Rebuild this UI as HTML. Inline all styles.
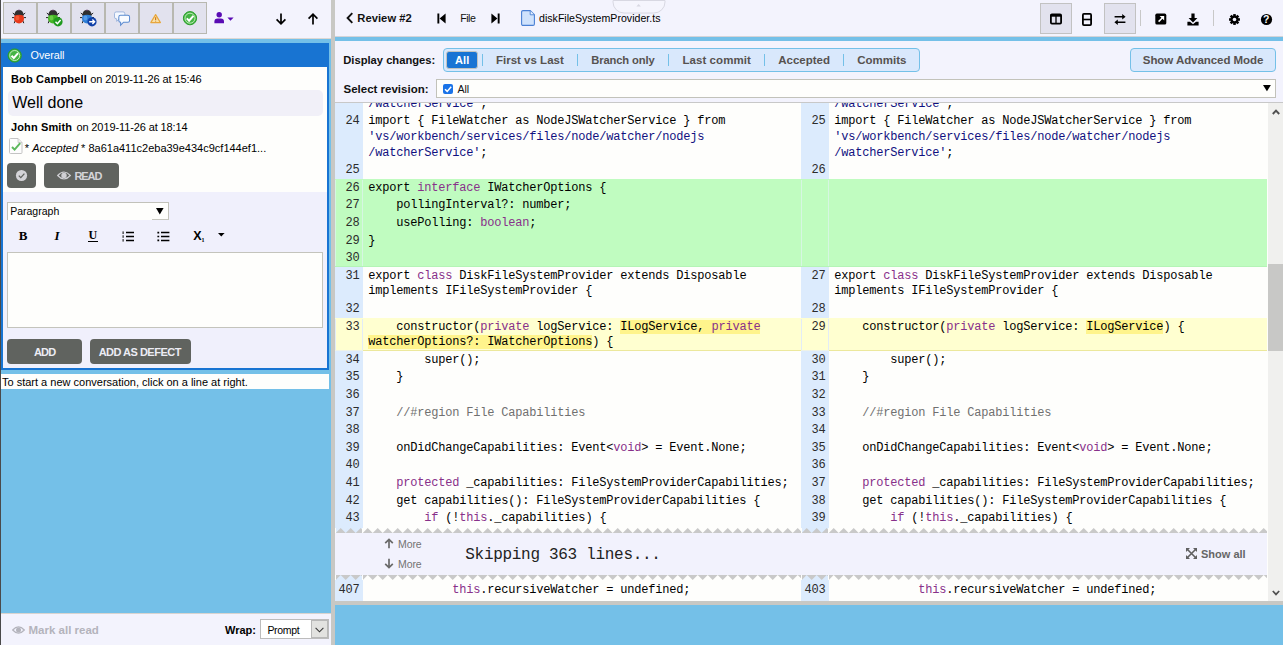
<!DOCTYPE html>
<html lang="en"><head><meta charset="utf-8"><title>Review #2 - diskFileSystemProvider.ts</title>
<style>
html,body{margin:0;padding:0}
body{width:1283px;height:645px;overflow:hidden;position:relative;background:#74c0e8;font-family:"Liberation Sans",Arial,sans-serif;font-size:11px;color:#000}
.b{position:absolute;box-sizing:border-box}
.t{position:absolute;white-space:pre;line-height:0}
.t:before{content:"";display:inline-block;height:40px;width:0}
.m{font-family:"Liberation Mono","Courier New",monospace;font-size:12px;letter-spacing:-0.2px}
.k{color:#88308a}.s{color:#101080}.c{color:#707070}
.h{background:#fff48c}
svg{position:absolute;overflow:visible}
</style></head><body>
<div class="b" style="left:0px;top:0px;width:1px;height:645px;background:#4a4a4a;"></div>
<div class="b" style="left:1px;top:0px;width:330px;height:38.5px;background:#f3f3fd;border-bottom:1px solid #dcd8d4;"></div>
<div class="b" style="left:1px;top:613px;width:330px;height:32px;background:#f3f3fd;border-top:1px solid #d8d4d0;"></div>
<div class="b" style="left:331px;top:0px;width:4px;height:645px;background:#c8c8c4;"></div>
<div class="b" style="left:335px;top:0px;width:948px;height:36.5px;background:#f3f3fd;border-bottom:1px solid #d4d4d8;"></div>
<div class="b" style="left:335px;top:41px;width:948px;height:61.5px;background:#f3f3fd;border-bottom:1px solid #c8c8c8;"></div>
<div class="b" style="left:335px;top:102.5px;width:933px;height:498.5px;background:#fefefc;"></div>
<div class="b" style="left:1268px;top:102.5px;width:15px;height:498.5px;background:#f0f0ee;"></div>
<div class="b" style="left:1268px;top:264px;width:15px;height:87px;background:#c8c8c6;"></div>
<div class="b" style="left:335px;top:600.6px;width:948px;height:4.2px;background:#c8c8c4;"></div>
<div class="b" style="left:335px;top:102.5px;width:932px;height:498.1px;overflow:hidden">
<div class="b" style="left:0px;top:0.0px;width:28px;height:425.5px;background:#dcebfd;"></div>
<div class="b" style="left:466px;top:0.0px;width:28px;height:425.5px;background:#dcebfd;"></div>
<div class="b" style="left:0px;top:477.5px;width:28px;height:21px;background:#dcebfd;"></div>
<div class="b" style="left:466px;top:477.5px;width:28px;height:21px;background:#dcebfd;"></div>
<div class="b" style="left:0px;top:76.5px;width:932px;height:87px;background:#c0fcc0;"></div>
<div class="b" style="left:0px;top:163.5px;width:932px;height:1px;background:#b4f4b6;"></div>
<div class="b" style="left:0px;top:215.5px;width:932px;height:33px;background:#ffffd0;"></div>
<div class="b" style="left:28px;top:247.5px;width:438px;height:1px;background:#ece89c;"></div>
<div class="b" style="left:494px;top:247.5px;width:438px;height:1px;background:#ece89c;"></div>
<div class="b" style="left:0px;top:247.5px;width:28px;height:1px;background:#eef2e8;"></div>
<div class="b" style="left:466px;top:247.5px;width:28px;height:1px;background:#eef2e8;"></div>
<div class="b" style="left:0px;top:77.5px;width:1px;height:86px;background:#d6f6e2;"></div>
<div class="b" style="left:0px;top:216.5px;width:1px;height:31px;background:#e2ecf6;"></div>
<div class="b" style="left:27px;top:77.5px;width:1px;height:86px;background:#d6f6e2;"></div>
<div class="b" style="left:27px;top:216.5px;width:1px;height:31px;background:#e2ecf6;"></div>
<div class="b" style="left:466px;top:77.5px;width:1px;height:86px;background:#d6f6e2;"></div>
<div class="b" style="left:466px;top:216.5px;width:1px;height:31px;background:#e2ecf6;"></div>
<div class="b" style="left:493px;top:77.5px;width:1px;height:86px;background:#d6f6e2;"></div>
<div class="b" style="left:493px;top:216.5px;width:1px;height:31px;background:#e2ecf6;"></div>
<div class="t m" style="left:33.3px;top:-35.5px;"><span class="s">/watcherService'</span>;</div>
<div class="t m" style="left:499.3px;top:-35.5px;"><span class="s">/watcherService'</span>;</div>
<div class="t m" style="left:33.3px;top:-18.5px;">import { FileWatcher as NodeJSWatcherService } from</div>
<div class="t m" style="left:33.3px;top:-2.5px;"><span class="s">'vs/workbench/services/files/node/watcher/nodejs</span></div>
<div class="t m" style="left:33.3px;top:13.5px;"><span class="s">/watcherService'</span>;</div>
<div class="t m" style="left:499.3px;top:-18.5px;">import { FileWatcher as NodeJSWatcherService } from</div>
<div class="t m" style="left:499.3px;top:-2.5px;"><span class="s">'vs/workbench/services/files/node/watcher/nodejs</span></div>
<div class="t m" style="left:499.3px;top:13.5px;"><span class="s">/watcherService'</span>;</div>
<div class="t m" style="left:-175.4px;top:-18.5px;color:#2c2c2c;width:200px;text-align:right;">24</div>
<div class="t m" style="left:290.6px;top:-18.5px;color:#2c2c2c;width:200px;text-align:right;">25</div>
<div class="t m" style="left:-175.4px;top:30.5px;color:#2c2c2c;width:200px;text-align:right;">25</div>
<div class="t m" style="left:290.6px;top:30.5px;color:#2c2c2c;width:200px;text-align:right;">26</div>
<div class="t m" style="left:33.3px;top:48.5px;">export <span class="k">interface</span> IWatcherOptions {</div>
<div class="t m" style="left:-175.4px;top:48.5px;color:#2c2c2c;width:200px;text-align:right;">26</div>
<div class="t m" style="left:33.3px;top:65.5px;">    pollingInterval?: number;</div>
<div class="t m" style="left:-175.4px;top:65.5px;color:#2c2c2c;width:200px;text-align:right;">27</div>
<div class="t m" style="left:33.3px;top:83.5px;">    usePolling: <span class="k">boolean</span>;</div>
<div class="t m" style="left:-175.4px;top:83.5px;color:#2c2c2c;width:200px;text-align:right;">28</div>
<div class="t m" style="left:33.3px;top:101.5px;">}</div>
<div class="t m" style="left:-175.4px;top:101.5px;color:#2c2c2c;width:200px;text-align:right;">29</div>
<div class="t m" style="left:-175.4px;top:118.5px;color:#2c2c2c;width:200px;text-align:right;">30</div>
<div class="t m" style="left:33.3px;top:136.5px;">export <span class="k">class</span> DiskFileSystemProvider extends Disposable</div>
<div class="t m" style="left:33.3px;top:151.5px;">implements IFileSystemProvider {</div>
<div class="t m" style="left:499.3px;top:136.5px;">export <span class="k">class</span> DiskFileSystemProvider extends Disposable</div>
<div class="t m" style="left:499.3px;top:151.5px;">implements IFileSystemProvider {</div>
<div class="t m" style="left:-175.4px;top:136.5px;color:#2c2c2c;width:200px;text-align:right;">31</div>
<div class="t m" style="left:290.6px;top:136.5px;color:#2c2c2c;width:200px;text-align:right;">27</div>
<div class="t m" style="left:-175.4px;top:169.5px;color:#2c2c2c;width:200px;text-align:right;">32</div>
<div class="t m" style="left:290.6px;top:169.5px;color:#2c2c2c;width:200px;text-align:right;">28</div>
<div class="t m" style="left:33.3px;top:187.5px;">    constructor(<span class="k">private</span> logService: <span class="h">ILogService, <span class="k">private</span></span></div>
<div class="t m" style="left:33.3px;top:202.5px;"><span class="h">watcherOptions?: IWatcherOptions</span>) {</div>
<div class="t m" style="left:499.3px;top:187.5px;">    constructor(<span class="k">private</span> logService: <span class="h">ILogService</span>) {</div>
<div class="t m" style="left:-175.4px;top:187.5px;color:#2c2c2c;width:200px;text-align:right;">33</div>
<div class="t m" style="left:290.6px;top:187.5px;color:#2c2c2c;width:200px;text-align:right;">29</div>
<div class="t m" style="left:33.3px;top:220.5px;">        super();</div>
<div class="t m" style="left:499.3px;top:220.5px;">        super();</div>
<div class="t m" style="left:-175.4px;top:220.5px;color:#2c2c2c;width:200px;text-align:right;">34</div>
<div class="t m" style="left:290.6px;top:220.5px;color:#2c2c2c;width:200px;text-align:right;">30</div>
<div class="t m" style="left:33.3px;top:237.5px;">    }</div>
<div class="t m" style="left:499.3px;top:237.5px;">    }</div>
<div class="t m" style="left:-175.4px;top:237.5px;color:#2c2c2c;width:200px;text-align:right;">35</div>
<div class="t m" style="left:290.6px;top:237.5px;color:#2c2c2c;width:200px;text-align:right;">31</div>
<div class="t m" style="left:-175.4px;top:255.5px;color:#2c2c2c;width:200px;text-align:right;">36</div>
<div class="t m" style="left:290.6px;top:255.5px;color:#2c2c2c;width:200px;text-align:right;">32</div>
<div class="t m" style="left:33.3px;top:273.5px;">    <span class="c">//#region File Capabilities</span></div>
<div class="t m" style="left:499.3px;top:273.5px;">    <span class="c">//#region File Capabilities</span></div>
<div class="t m" style="left:-175.4px;top:273.5px;color:#2c2c2c;width:200px;text-align:right;">37</div>
<div class="t m" style="left:290.6px;top:273.5px;color:#2c2c2c;width:200px;text-align:right;">33</div>
<div class="t m" style="left:-175.4px;top:290.5px;color:#2c2c2c;width:200px;text-align:right;">38</div>
<div class="t m" style="left:290.6px;top:290.5px;color:#2c2c2c;width:200px;text-align:right;">34</div>
<div class="t m" style="left:33.3px;top:308.5px;">    onDidChangeCapabilities: Event&lt;<span class="k">void</span>&gt; = Event.None;</div>
<div class="t m" style="left:499.3px;top:308.5px;">    onDidChangeCapabilities: Event&lt;<span class="k">void</span>&gt; = Event.None;</div>
<div class="t m" style="left:-175.4px;top:308.5px;color:#2c2c2c;width:200px;text-align:right;">39</div>
<div class="t m" style="left:290.6px;top:308.5px;color:#2c2c2c;width:200px;text-align:right;">35</div>
<div class="t m" style="left:-175.4px;top:325.5px;color:#2c2c2c;width:200px;text-align:right;">40</div>
<div class="t m" style="left:290.6px;top:325.5px;color:#2c2c2c;width:200px;text-align:right;">36</div>
<div class="t m" style="left:33.3px;top:343.5px;">    <span class="k">protected</span> _capabilities: FileSystemProviderCapabilities;</div>
<div class="t m" style="left:499.3px;top:343.5px;">    <span class="k">protected</span> _capabilities: FileSystemProviderCapabilities;</div>
<div class="t m" style="left:-175.4px;top:343.5px;color:#2c2c2c;width:200px;text-align:right;">41</div>
<div class="t m" style="left:290.6px;top:343.5px;color:#2c2c2c;width:200px;text-align:right;">37</div>
<div class="t m" style="left:33.3px;top:361.5px;">    get capabilities(): FileSystemProviderCapabilities {</div>
<div class="t m" style="left:499.3px;top:361.5px;">    get capabilities(): FileSystemProviderCapabilities {</div>
<div class="t m" style="left:-175.4px;top:361.5px;color:#2c2c2c;width:200px;text-align:right;">42</div>
<div class="t m" style="left:290.6px;top:361.5px;color:#2c2c2c;width:200px;text-align:right;">38</div>
<div class="t m" style="left:33.3px;top:378.5px;">        <span class="k">if</span> (!<span class="k">this</span>._capabilities) {</div>
<div class="t m" style="left:499.3px;top:378.5px;">        <span class="k">if</span> (!<span class="k">this</span>._capabilities) {</div>
<div class="t m" style="left:-175.4px;top:378.5px;color:#2c2c2c;width:200px;text-align:right;">43</div>
<div class="t m" style="left:290.6px;top:378.5px;color:#2c2c2c;width:200px;text-align:right;">39</div>
<div class="b" style="left:0px;top:430.5px;width:932px;height:42px;background:#f2f2fd;"></div>
<div class="b" style="left:1px;top:425.5px;width:26.2px;height:5px;background:#dcebfd;"></div>
<div class="b" style="left:1px;top:472.5px;width:26.2px;height:5px;background:#dcebfd;"></div>
<svg style="left:1px;top:425.5px;overflow:hidden" width="26.2" height="5" viewBox="0 0 26.2 5"><path d="M-0.3,5 l5,-4.9 l5,4.9zM9.7,5 l5,-4.9 l5,4.9zM19.7,5 l5,-4.9 l5,4.9zM29.7,5 l5,-4.9 l5,4.9z" fill="#c9c9c9"/></svg>
<svg style="left:1px;top:472.5px;overflow:hidden" width="26.2" height="5" viewBox="0 0 26.2 5"><path d="M-5.3,0 l5,5 l5,-5zM4.7,0 l5,5 l5,-5zM14.7,0 l5,5 l5,-5zM24.7,0 l5,5 l5,-5zM34.7,0 l5,5 l5,-5z" fill="#c9c9c9"/></svg>
<svg style="left:28px;top:425.5px;overflow:hidden" width="438" height="5" viewBox="0 0 438 5"><path d="M-0.3,5 l5,-4.9 l5,4.9zM9.7,5 l5,-4.9 l5,4.9zM19.7,5 l5,-4.9 l5,4.9zM29.7,5 l5,-4.9 l5,4.9zM39.7,5 l5,-4.9 l5,4.9zM49.7,5 l5,-4.9 l5,4.9zM59.7,5 l5,-4.9 l5,4.9zM69.7,5 l5,-4.9 l5,4.9zM79.7,5 l5,-4.9 l5,4.9zM89.7,5 l5,-4.9 l5,4.9zM99.7,5 l5,-4.9 l5,4.9zM109.7,5 l5,-4.9 l5,4.9zM119.7,5 l5,-4.9 l5,4.9zM129.7,5 l5,-4.9 l5,4.9zM139.7,5 l5,-4.9 l5,4.9zM149.7,5 l5,-4.9 l5,4.9zM159.7,5 l5,-4.9 l5,4.9zM169.7,5 l5,-4.9 l5,4.9zM179.7,5 l5,-4.9 l5,4.9zM189.7,5 l5,-4.9 l5,4.9zM199.7,5 l5,-4.9 l5,4.9zM209.7,5 l5,-4.9 l5,4.9zM219.7,5 l5,-4.9 l5,4.9zM229.7,5 l5,-4.9 l5,4.9zM239.7,5 l5,-4.9 l5,4.9zM249.7,5 l5,-4.9 l5,4.9zM259.7,5 l5,-4.9 l5,4.9zM269.7,5 l5,-4.9 l5,4.9zM279.7,5 l5,-4.9 l5,4.9zM289.7,5 l5,-4.9 l5,4.9zM299.7,5 l5,-4.9 l5,4.9zM309.7,5 l5,-4.9 l5,4.9zM319.7,5 l5,-4.9 l5,4.9zM329.7,5 l5,-4.9 l5,4.9zM339.7,5 l5,-4.9 l5,4.9zM349.7,5 l5,-4.9 l5,4.9zM359.7,5 l5,-4.9 l5,4.9zM369.7,5 l5,-4.9 l5,4.9zM379.7,5 l5,-4.9 l5,4.9zM389.7,5 l5,-4.9 l5,4.9zM399.7,5 l5,-4.9 l5,4.9zM409.7,5 l5,-4.9 l5,4.9zM419.7,5 l5,-4.9 l5,4.9zM429.7,5 l5,-4.9 l5,4.9zM439.7,5 l5,-4.9 l5,4.9z" fill="#c9c9c9"/></svg>
<svg style="left:28px;top:472.5px;overflow:hidden" width="438" height="5" viewBox="0 0 438 5"><path d="M-5.3,0 l5,5 l5,-5zM4.7,0 l5,5 l5,-5zM14.7,0 l5,5 l5,-5zM24.7,0 l5,5 l5,-5zM34.7,0 l5,5 l5,-5zM44.7,0 l5,5 l5,-5zM54.7,0 l5,5 l5,-5zM64.7,0 l5,5 l5,-5zM74.7,0 l5,5 l5,-5zM84.7,0 l5,5 l5,-5zM94.7,0 l5,5 l5,-5zM104.7,0 l5,5 l5,-5zM114.7,0 l5,5 l5,-5zM124.7,0 l5,5 l5,-5zM134.7,0 l5,5 l5,-5zM144.7,0 l5,5 l5,-5zM154.7,0 l5,5 l5,-5zM164.7,0 l5,5 l5,-5zM174.7,0 l5,5 l5,-5zM184.7,0 l5,5 l5,-5zM194.7,0 l5,5 l5,-5zM204.7,0 l5,5 l5,-5zM214.7,0 l5,5 l5,-5zM224.7,0 l5,5 l5,-5zM234.7,0 l5,5 l5,-5zM244.7,0 l5,5 l5,-5zM254.7,0 l5,5 l5,-5zM264.7,0 l5,5 l5,-5zM274.7,0 l5,5 l5,-5zM284.7,0 l5,5 l5,-5zM294.7,0 l5,5 l5,-5zM304.7,0 l5,5 l5,-5zM314.7,0 l5,5 l5,-5zM324.7,0 l5,5 l5,-5zM334.7,0 l5,5 l5,-5zM344.7,0 l5,5 l5,-5zM354.7,0 l5,5 l5,-5zM364.7,0 l5,5 l5,-5zM374.7,0 l5,5 l5,-5zM384.7,0 l5,5 l5,-5zM394.7,0 l5,5 l5,-5zM404.7,0 l5,5 l5,-5zM414.7,0 l5,5 l5,-5zM424.7,0 l5,5 l5,-5zM434.7,0 l5,5 l5,-5zM444.7,0 l5,5 l5,-5z" fill="#c9c9c9"/></svg>
<div class="b" style="left:467px;top:425.5px;width:26.3px;height:5px;background:#dcebfd;"></div>
<div class="b" style="left:467px;top:472.5px;width:26.3px;height:5px;background:#dcebfd;"></div>
<svg style="left:467px;top:425.5px;overflow:hidden" width="26.3" height="5" viewBox="0 0 26.3 5"><path d="M-0.3,5 l5,-4.9 l5,4.9zM9.7,5 l5,-4.9 l5,4.9zM19.7,5 l5,-4.9 l5,4.9zM29.7,5 l5,-4.9 l5,4.9z" fill="#c9c9c9"/></svg>
<svg style="left:467px;top:472.5px;overflow:hidden" width="26.3" height="5" viewBox="0 0 26.3 5"><path d="M-5.3,0 l5,5 l5,-5zM4.7,0 l5,5 l5,-5zM14.7,0 l5,5 l5,-5zM24.7,0 l5,5 l5,-5zM34.7,0 l5,5 l5,-5z" fill="#c9c9c9"/></svg>
<svg style="left:494px;top:425.5px;overflow:hidden" width="438" height="5" viewBox="0 0 438 5"><path d="M-0.3,5 l5,-4.9 l5,4.9zM9.7,5 l5,-4.9 l5,4.9zM19.7,5 l5,-4.9 l5,4.9zM29.7,5 l5,-4.9 l5,4.9zM39.7,5 l5,-4.9 l5,4.9zM49.7,5 l5,-4.9 l5,4.9zM59.7,5 l5,-4.9 l5,4.9zM69.7,5 l5,-4.9 l5,4.9zM79.7,5 l5,-4.9 l5,4.9zM89.7,5 l5,-4.9 l5,4.9zM99.7,5 l5,-4.9 l5,4.9zM109.7,5 l5,-4.9 l5,4.9zM119.7,5 l5,-4.9 l5,4.9zM129.7,5 l5,-4.9 l5,4.9zM139.7,5 l5,-4.9 l5,4.9zM149.7,5 l5,-4.9 l5,4.9zM159.7,5 l5,-4.9 l5,4.9zM169.7,5 l5,-4.9 l5,4.9zM179.7,5 l5,-4.9 l5,4.9zM189.7,5 l5,-4.9 l5,4.9zM199.7,5 l5,-4.9 l5,4.9zM209.7,5 l5,-4.9 l5,4.9zM219.7,5 l5,-4.9 l5,4.9zM229.7,5 l5,-4.9 l5,4.9zM239.7,5 l5,-4.9 l5,4.9zM249.7,5 l5,-4.9 l5,4.9zM259.7,5 l5,-4.9 l5,4.9zM269.7,5 l5,-4.9 l5,4.9zM279.7,5 l5,-4.9 l5,4.9zM289.7,5 l5,-4.9 l5,4.9zM299.7,5 l5,-4.9 l5,4.9zM309.7,5 l5,-4.9 l5,4.9zM319.7,5 l5,-4.9 l5,4.9zM329.7,5 l5,-4.9 l5,4.9zM339.7,5 l5,-4.9 l5,4.9zM349.7,5 l5,-4.9 l5,4.9zM359.7,5 l5,-4.9 l5,4.9zM369.7,5 l5,-4.9 l5,4.9zM379.7,5 l5,-4.9 l5,4.9zM389.7,5 l5,-4.9 l5,4.9zM399.7,5 l5,-4.9 l5,4.9zM409.7,5 l5,-4.9 l5,4.9zM419.7,5 l5,-4.9 l5,4.9zM429.7,5 l5,-4.9 l5,4.9zM439.7,5 l5,-4.9 l5,4.9z" fill="#c9c9c9"/></svg>
<svg style="left:494px;top:472.5px;overflow:hidden" width="438" height="5" viewBox="0 0 438 5"><path d="M-5.3,0 l5,5 l5,-5zM4.7,0 l5,5 l5,-5zM14.7,0 l5,5 l5,-5zM24.7,0 l5,5 l5,-5zM34.7,0 l5,5 l5,-5zM44.7,0 l5,5 l5,-5zM54.7,0 l5,5 l5,-5zM64.7,0 l5,5 l5,-5zM74.7,0 l5,5 l5,-5zM84.7,0 l5,5 l5,-5zM94.7,0 l5,5 l5,-5zM104.7,0 l5,5 l5,-5zM114.7,0 l5,5 l5,-5zM124.7,0 l5,5 l5,-5zM134.7,0 l5,5 l5,-5zM144.7,0 l5,5 l5,-5zM154.7,0 l5,5 l5,-5zM164.7,0 l5,5 l5,-5zM174.7,0 l5,5 l5,-5zM184.7,0 l5,5 l5,-5zM194.7,0 l5,5 l5,-5zM204.7,0 l5,5 l5,-5zM214.7,0 l5,5 l5,-5zM224.7,0 l5,5 l5,-5zM234.7,0 l5,5 l5,-5zM244.7,0 l5,5 l5,-5zM254.7,0 l5,5 l5,-5zM264.7,0 l5,5 l5,-5zM274.7,0 l5,5 l5,-5zM284.7,0 l5,5 l5,-5zM294.7,0 l5,5 l5,-5zM304.7,0 l5,5 l5,-5zM314.7,0 l5,5 l5,-5zM324.7,0 l5,5 l5,-5zM334.7,0 l5,5 l5,-5zM344.7,0 l5,5 l5,-5zM354.7,0 l5,5 l5,-5zM364.7,0 l5,5 l5,-5zM374.7,0 l5,5 l5,-5zM384.7,0 l5,5 l5,-5zM394.7,0 l5,5 l5,-5zM404.7,0 l5,5 l5,-5zM414.7,0 l5,5 l5,-5zM424.7,0 l5,5 l5,-5zM434.7,0 l5,5 l5,-5zM444.7,0 l5,5 l5,-5z" fill="#c9c9c9"/></svg>
<div class="b" style="left:0px;top:425.5px;width:0.9px;height:5px;background:#fefefc;"></div>
<div class="b" style="left:0px;top:472.5px;width:0.9px;height:5px;background:#fefefc;"></div>
<div class="b" style="left:27.2px;top:425.5px;width:0.9px;height:5px;background:#fefefc;"></div>
<div class="b" style="left:27.2px;top:472.5px;width:0.9px;height:5px;background:#fefefc;"></div>
<div class="b" style="left:466px;top:425.5px;width:0.9px;height:5px;background:#fefefc;"></div>
<div class="b" style="left:466px;top:472.5px;width:0.9px;height:5px;background:#fefefc;"></div>
<div class="b" style="left:493.3px;top:425.5px;width:0.9px;height:5px;background:#fefefc;"></div>
<div class="b" style="left:493.3px;top:472.5px;width:0.9px;height:5px;background:#fefefc;"></div>
<svg style="left:49px;top:435.0px" width="10" height="11" viewBox="0 0 10 11"><path d="M5,10.2 V1.6 M1.2,5.2 L5,1.4 L8.8,5.2" fill="none" stroke="#6a6a6a" stroke-width="1.7"/></svg>
<svg style="left:49px;top:455.5px" width="10" height="11" viewBox="0 0 10 11"><path d="M5,0.8 V9.4 M1.2,5.8 L5,9.6 L8.8,5.8" fill="none" stroke="#6a6a6a" stroke-width="1.7"/></svg>
<div class="t" style="left:63.1px;top:405.2px;font-size:10.5px;color:#747474;letter-spacing:-0.112px;">More</div>
<div class="t" style="left:63.1px;top:425.5px;font-size:10.5px;color:#747474;letter-spacing:-0.112px;">More</div>
<div class="t m" style="left:130.3px;top:416.5px;font-size:16px;color:#222;letter-spacing:-0.3px;">Skipping 363 lines...</div>
<svg style="left:850.7px;top:445.70000000000005px" width="11" height="11" viewBox="0 0 11 11"><path d="M1.5,1.5 L9.5,9.5 M9.5,1.5 L1.5,9.5" stroke="#606060" stroke-width="1.6" fill="none"/><path d="M0,0h4l-4,4z M11,0h-4l4,4z M0,11h4l-4,-4z M11,11h-4l4,-4z" fill="#606060"/></svg>
<div class="t" style="left:866px;top:415.3px;font-size:11px;color:#666;font-weight:700;">Show all</div>
<div class="t m" style="left:33.3px;top:450.5px;">            <span class="k">this</span>.recursiveWatcher = undefined;</div>
<div class="t m" style="left:499.3px;top:450.5px;">            <span class="k">this</span>.recursiveWatcher = undefined;</div>
<div class="t m" style="left:-175.4px;top:450.5px;color:#2c2c2c;width:200px;text-align:right;">407</div>
<div class="t m" style="left:290.6px;top:450.5px;color:#2c2c2c;width:200px;text-align:right;">403</div>
</div>
<svg style="left:1271.5px;top:108.6px" width="8" height="6" viewBox="0 0 8 6"><path d="M0.8,5 L4,1.6 L7.2,5" fill="none" stroke="#505050" stroke-width="1.9"/></svg>
<svg style="left:1271.5px;top:590px" width="8" height="6" viewBox="0 0 8 6"><path d="M0.8,1 L4,4.4 L7.2,1" fill="none" stroke="#505050" stroke-width="1.7"/></svg>
<div class="b" style="left:3px;top:2px;width:34px;height:32px;background:#e2e2ee;border:1px solid #b8b8b0;"></div>
<div class="b" style="left:37px;top:2px;width:34px;height:32px;background:#e2e2ee;border:1px solid #b8b8b0;"></div>
<div class="b" style="left:71px;top:2px;width:34px;height:32px;background:#e2e2ee;border:1px solid #b8b8b0;"></div>
<div class="b" style="left:105px;top:2px;width:34px;height:32px;background:#e2e2ee;border:1px solid #b8b8b0;"></div>
<div class="b" style="left:139px;top:2px;width:34px;height:32px;background:#e2e2ee;border:1px solid #b8b8b0;"></div>
<div class="b" style="left:173px;top:2px;width:34px;height:32px;background:#e2e2ee;border:1px solid #b8b8b0;"></div>
<svg style="left:3px;top:2px" width="34" height="32" viewBox="0 0 34 32"><g transform="translate(9,7.6)"><path d="M0.8,3.4 L3,5.2 M13.2,3.4 L11,5.2 M0,8 H2.4 M14,8 H11.6 M2.2,13.6 L3.4,10.6 M11.8,13.6 L10.6,10.6" stroke="#222" stroke-width="1" fill="none"/><ellipse cx="7" cy="8.8" rx="5" ry="5" fill="#e8391a"/><ellipse cx="5.4" cy="8.4" rx="2" ry="2.4" fill="#ff7a50" opacity="0.5"/><path d="M2.3,6.2 Q2.4,0.3 7,0.3 Q11.6,0.3 11.7,6.2 Q7,4 2.3,6.2z" fill="#303030"/><circle cx="7" cy="0.7" r="0.8" fill="#704070"/></g></svg>
<svg style="left:37px;top:2px" width="34" height="32" viewBox="0 0 34 32"><g transform="translate(9,7.6)"><path d="M0.8,3.4 L3,5.2 M13.2,3.4 L11,5.2 M0,8 H2.4 M14,8 H11.6 M2.2,13.6 L3.4,10.6 M11.8,13.6 L10.6,10.6" stroke="#222" stroke-width="1" fill="none"/><ellipse cx="7" cy="8.8" rx="5" ry="5" fill="#44b424"/><ellipse cx="5.4" cy="8.4" rx="2" ry="2.4" fill="#8ee868" opacity="0.5"/><path d="M2.3,6.2 Q2.4,0.3 7,0.3 Q11.6,0.3 11.7,6.2 Q7,4 2.3,6.2z" fill="#303030"/><circle cx="7" cy="0.7" r="0.8" fill="#704070"/></g><circle cx="21" cy="19.8" r="4.6" fill="#1f9a1f"/><path d="M18.5,19.8 L20.4,21.7 L23.6,18" fill="none" stroke="#fff" stroke-width="1.5"/></svg>
<svg style="left:71px;top:2px" width="34" height="32" viewBox="0 0 34 32"><g transform="translate(9,7.6)"><path d="M0.8,3.4 L3,5.2 M13.2,3.4 L11,5.2 M0,8 H2.4 M14,8 H11.6 M2.2,13.6 L3.4,10.6 M11.8,13.6 L10.6,10.6" stroke="#222" stroke-width="1" fill="none"/><ellipse cx="7" cy="8.8" rx="5" ry="5" fill="#2f7fd6"/><ellipse cx="5.4" cy="8.4" rx="2" ry="2.4" fill="#80bcff" opacity="0.5"/><path d="M2.3,6.2 Q2.4,0.3 7,0.3 Q11.6,0.3 11.7,6.2 Q7,4 2.3,6.2z" fill="#303030"/><circle cx="7" cy="0.7" r="0.8" fill="#704070"/></g><circle cx="21" cy="19.8" r="4.6" fill="#1040a8"/><path d="M18.2,19.8 H23.2 M21.4,17.6 L23.6,19.8 L21.4,22" fill="none" stroke="#fff" stroke-width="1.4"/></svg>
<svg style="left:105px;top:2px" width="34" height="32" viewBox="0 0 34 32"><g transform="translate(2.2,2.6) scale(0.86)"><path d="M10.5,8.5 h8 a2,2 0 0 1 2,2 v4 a2,2 0 0 1 -2,2 h-4.5 l-3,3 v-3 h-0.5 a2,2 0 0 1 -2,-2 v-4 a2,2 0 0 1 2,-2z" fill="#f4f8ff" stroke="#9cb4dc" stroke-width="1.1"/><path d="M16,12.5 h8 a2,2 0 0 1 2,2 v4 a2,2 0 0 1 -2,2 h-5 l-3.4,3.4 v-3.4 h-0.1 a2,2 0 0 1 -2,-2 v-4 a2,2 0 0 1 2,-2z" fill="#f8fbff" stroke="#5a8ad0" stroke-width="1.2"/></g></svg>
<svg style="left:139px;top:2px" width="34" height="32" viewBox="0 0 34 32"><path d="M16.6,12.6 L21.4,20.6 H11.8 Z" fill="#f8e0a8" stroke="#e8a63c" stroke-width="1.2" stroke-linejoin="round"/><path d="M16.6,15.2 V18 M16.6,18.8 V19.6" stroke="#d07818" stroke-width="1.2"/></svg>
<svg style="left:173px;top:2px" width="34" height="32" viewBox="0 0 34 32"><circle cx="17" cy="16.2" r="6.6" fill="#44b444" stroke="#2a9e2a" stroke-width="1"/><circle cx="17" cy="16.2" r="5.0" fill="none" stroke="#c8f0c0" stroke-width="0.9"/><path d="M13.8,16.4 L16.1,18.7 L20.4,13.899999999999999" fill="none" stroke="#fff" stroke-width="2"/></svg>
<svg style="left:212.6px;top:11px" width="24" height="16" viewBox="0 0 24 16"><circle cx="6.2" cy="3.8" r="2.7" fill="#5a0cb4"/><path d="M1.4,12.2 v-1.6 a3.2,3.2 0 0 1 3.2,-3.2 h3.2 a3.2,3.2 0 0 1 3.2,3.2 v1.6z" fill="#5a0cb4"/><path d="M14.4,6.4 h6.2 l-3.1,3.3z" fill="#5a0cb4"/></svg>
<svg style="left:275px;top:12px" width="12" height="14" viewBox="0 0 12 14"><path d="M6,1.5 V11.5 M1.6,7.4 L6,11.8 L10.4,7.4" fill="none" stroke="#000" stroke-width="1.7"/></svg>
<svg style="left:307px;top:12px" width="12" height="14" viewBox="0 0 12 14"><path d="M6,12.5 V2.5 M1.6,6.6 L6,2.2 L10.4,6.6" fill="none" stroke="#000" stroke-width="1.7"/></svg>
<div class="b" style="left:1px;top:43px;width:328px;height:326.5px;background:#f0f0fc;border:2px solid #1874d2;border-top:0;"></div>
<div class="b" style="left:1px;top:43px;width:328px;height:24.3px;background:#1874d2;"></div>
<svg style="left:7px;top:47.5px" width="16" height="16" viewBox="0 0 16 16"><circle cx="7.7" cy="7.5" r="6.6" fill="#44b444" stroke="#2a9e2a" stroke-width="1"/><circle cx="7.7" cy="7.5" r="5.0" fill="none" stroke="#c8f0c0" stroke-width="0.9"/><path d="M4.5,7.7 L6.8,10.0 L11.1,5.2" fill="none" stroke="#fff" stroke-width="2"/></svg>
<div class="t" style="left:30.6px;top:19.2px;font-size:10.8px;color:#fff;letter-spacing:-0.051px;">Overall</div>
<div class="b" style="left:3px;top:67.3px;width:324px;height:124.7px;background:#fefefc;"></div>
<div class="t" style="left:11px;top:43px;font-size:11px;font-weight:700;letter-spacing:0.168px;">Bob Campbell</div>
<div class="t" style="left:90.2px;top:43px;font-size:11px;letter-spacing:-0.103px;">on 2019-11-26 at 15:46</div>
<div class="b" style="left:8px;top:90.4px;width:314.6px;height:25.6px;background:#f1f0f8;border-radius:5px;"></div>
<div class="t" style="left:12.3px;top:67.6px;font-size:16px;">Well done</div>
<div class="t" style="left:11px;top:91px;font-size:11px;font-weight:700;letter-spacing:0.123px;">John Smith</div>
<div class="t" style="left:76.4px;top:91px;font-size:11px;letter-spacing:-0.108px;">on 2019-11-26 at 18:14</div>
<svg style="left:9.2px;top:138.1px" width="14" height="16" viewBox="0 0 14 16"><path d="M0.5,1.5 a1,1 0 0 1 1,-1 h7.5 l4,4 v10 a1,1 0 0 1 -1,1 h-10.5 a1,1 0 0 1 -1,-1z" fill="#fdfdfd" stroke="#c4c4c4" stroke-width="1"/><path d="M9,0.5 v4 h4" fill="#eee" stroke="#c4c4c4" stroke-width="0.8"/><path d="M3,9 L5.6,11.6 L11.2,5.2" fill="none" stroke="#5cb85c" stroke-width="2"/></svg>
<div class="t" style="left:24.8px;top:111.6px;font-size:11px;">* <i>Accepted</i> * 8a61a411c2eba39e434c9cf144ef1...</div>
<div class="b" style="left:7px;top:163px;width:29px;height:25px;background:#60635f;border-radius:4px;"></div>
<svg style="left:15px;top:169px" width="13" height="13" viewBox="0 0 13 13"><circle cx="6.5" cy="6.5" r="5.6" fill="#d4d4d8"/><path d="M3.8,6.6 L5.8,8.6 L9.4,4.6" fill="none" stroke="#60635f" stroke-width="1.3"/></svg>
<div class="b" style="left:44px;top:163px;width:75px;height:25px;background:#60635f;border-radius:4px;"></div>
<svg style="left:57px;top:170px" width="14" height="11" viewBox="0 0 14 11"><path d="M0.7,5.5 Q7,-1.5 13.3,5.5 Q7,12.5 0.7,5.5z" fill="none" stroke="#d0d0d4" stroke-width="1.2"/><circle cx="7" cy="5.5" r="2.7" fill="#d0d0d4"/></svg>
<div class="t" style="left:74.4px;top:140px;font-size:11px;color:#d4d4d8;font-weight:700;letter-spacing:-1.057px;">READ</div>
<div class="b" style="left:7px;top:202px;width:162px;height:18px;background:#fefefc;border:1px solid #c2c2ba;border-bottom:0;"></div>
<div class="b" style="left:152px;top:219px;width:17px;height:1px;background:#c6c6be;"></div>
<div class="t" style="left:10.2px;top:174.8px;font-size:10.5px;">Paragraph</div>
<svg style="left:156.4px;top:208px" width="8" height="7" viewBox="0 0 8 7"><path d="M0,0 h7.6 l-3.8,6.4z" fill="#000"/></svg>
<div class="t" style="left:18.8px;top:200.2px;font-size:13px;font-weight:700;font-family:'Liberation Serif',serif;">B</div>
<div class="t" style="left:54.6px;top:200.2px;font-size:13px;font-weight:700;font-style:italic;font-family:'Liberation Serif',serif;">I</div>
<div class="t" style="left:88.6px;top:199.2px;font-size:12px;font-weight:700;font-family:'Liberation Serif',serif;">U</div>
<div class="b" style="left:88.3px;top:240.6px;width:10px;height:1.3px;background:#000;"></div>
<svg style="left:122px;top:230.6px" width="13" height="11" viewBox="0 0 13 11"><path d="M4,1.6 H12 M4,5.5 H12 M4,9.4 H12" stroke="#000" stroke-width="1.5"/><path d="M1.1,0.4 V3 M1.1,4.3 V6.8 M1.1,8.1 V10.6" stroke="#000" stroke-width="1"/></svg>
<svg style="left:157px;top:230.6px" width="13" height="11" viewBox="0 0 13 11"><path d="M4,1.6 H12.4 M4,5.5 H12.4 M4,9.4 H12.4" stroke="#000" stroke-width="1.5"/><path d="M0.4,1.6 H2.2 M0.4,5.5 H2.2 M0.4,9.4 H2.2" stroke="#000" stroke-width="1.7"/></svg>
<div class="t" style="left:193.2px;top:200px;font-size:12.5px;font-weight:700;">X</div>
<div class="t" style="left:201.6px;top:201.6px;font-size:6px;font-weight:700;font-family:'Liberation Serif',serif;">1</div>
<svg style="left:218.3px;top:233.4px" width="7" height="4" viewBox="0 0 7 4"><path d="M0,0 h6.6 l-3.3,3.6z" fill="#000"/></svg>
<div class="b" style="left:7px;top:252.2px;width:315.5px;height:76px;background:#fefefc;border:1px solid #c4c4bc;"></div>
<div class="b" style="left:7px;top:339px;width:75px;height:25px;background:#60635f;border-radius:4px;"></div>
<div class="t" style="left:34.1px;top:315.6px;font-size:11px;color:#ececf4;font-weight:700;letter-spacing:-0.922px;">ADD</div>
<div class="b" style="left:90px;top:339px;width:100.7px;height:25px;background:#60635f;border-radius:4px;"></div>
<div class="t" style="left:98.7px;top:315.6px;font-size:11px;color:#ececf4;font-weight:700;letter-spacing:-0.511px;">ADD AS DEFECT</div>
<div class="b" style="left:1px;top:374px;width:328px;height:15px;background:#fefefc;"></div>
<div class="t" style="left:2px;top:345.6px;font-size:11px;">To start a new conversation, click on a line at right.</div>
<svg style="left:12px;top:625px" width="13" height="10" viewBox="0 0 13 10"><path d="M0.7,5 Q6.5,-1.4 12.3,5 Q6.5,11.4 0.7,5z" fill="none" stroke="#b4b4bc" stroke-width="1.2"/><circle cx="6.5" cy="5" r="2.5" fill="#b4b4bc"/></svg>
<div class="t" style="left:28.5px;top:593.7px;font-size:11.5px;color:#b4b4bc;font-weight:700;">Mark all read</div>
<div class="t" style="left:225.1px;top:594px;font-size:11px;font-weight:700;letter-spacing:-0.042px;">Wrap:</div>
<div class="b" style="left:260.2px;top:619.3px;width:68.6px;height:20.2px;background:#fff;border:1px solid #bcbcbc;"></div>
<div class="b" style="left:311.3px;top:620.3px;width:16.5px;height:18.2px;background:#e2e2e0;border:1px solid #b8b8b8;"></div>
<div class="t" style="left:267.4px;top:594px;font-size:10.5px;letter-spacing:-0.289px;">Prompt</div>
<svg style="left:314.6px;top:626.8px" width="9" height="6" viewBox="0 0 9 6"><path d="M0.6,0.8 L4.5,4.8 L8.4,0.8" fill="none" stroke="#3a3a3a" stroke-width="1.1"/></svg>
<svg style="left:612px;top:-2px" width="54" height="16" viewBox="0 0 54 16"><path d="M1,2.5 V4 a11,11 0 0 0 11,11 h30 a11,11 0 0 0 11,-11 V2.5z" fill="#f5f5fd" stroke="#d8d8e2" stroke-width="1"/><path d="M24.4,8.6 h4.4 l-2.2,-2.6z" fill="#d8d8e2"/></svg>
<svg style="left:346px;top:12px" width="8" height="12" viewBox="0 0 8 12"><path d="M6.3,1.2 L1.6,6 L6.3,10.8" fill="none" stroke="#111" stroke-width="1.9"/></svg>
<div class="t" style="left:357.3px;top:-18.1px;font-size:11.2px;color:#111;font-weight:700;letter-spacing:0.049px;">Review #2</div>
<svg style="left:437px;top:13px" width="9" height="11" viewBox="0 0 9 11"><path d="M0.4,0.6 h1.9 v9.8 h-1.9z M8.6,0.6 v9.8 l-6,-4.9z" fill="#000"/></svg>
<div class="t" style="left:460.2px;top:-18.1px;font-size:10.6px;color:#111;letter-spacing:-0.459px;">File</div>
<svg style="left:491px;top:13px" width="9" height="11" viewBox="0 0 9 11"><path d="M8.6,0.6 h-1.9 v9.8 h1.9z M0.4,0.6 v9.8 l6,-4.9z" fill="#000"/></svg>
<svg style="left:521px;top:10px" width="14" height="16" viewBox="0 0 14 16"><path d="M0.6,2 a1.4,1.4 0 0 1 1.4,-1.4 h7.2 l4.2,4.2 v9.2 a1.4,1.4 0 0 1 -1.4,1.4 h-10 a1.4,1.4 0 0 1 -1.4,-1.4z" fill="#cfe2fc" stroke="#4a80d4" stroke-width="1.1"/><path d="M9.2,0.8 v4 h4" fill="#e6f0ff" stroke="#4a80d4" stroke-width="0.9"/></svg>
<div class="t" style="left:539px;top:-18.1px;font-size:10.6px;letter-spacing:0.009px;">diskFileSystemProvider.ts</div>
<div class="b" style="left:1040px;top:2.5px;width:32px;height:31px;background:#e2e2ee;border:1px solid #c2c2c2;"></div>
<div class="b" style="left:1104px;top:2.5px;width:32px;height:31px;background:#e2e2ee;border:1px solid #c2c2c2;"></div>
<div class="b" style="left:1140px;top:10px;width:1px;height:16px;background:#c8c8c8;"></div>
<div class="b" style="left:1213px;top:10px;width:1px;height:16px;background:#c8c8c8;"></div>
<svg style="left:1050px;top:13px" width="12" height="12" viewBox="0 0 12 12"><rect x="0.9" y="1.4" width="10.2" height="9.2" rx="1" fill="none" stroke="#000" stroke-width="1.8"/><path d="M0.9,2.6 H11.1" stroke="#000" stroke-width="2.2"/><path d="M6,2 V10.6" stroke="#000" stroke-width="1.3"/></svg>
<svg style="left:1082px;top:12.5px" width="10" height="13" viewBox="0 0 10 13"><rect x="0.9" y="0.9" width="8.2" height="11.2" rx="1" fill="none" stroke="#000" stroke-width="1.8"/><path d="M0.9,6.5 H9.1" stroke="#000" stroke-width="1.6"/></svg>
<svg style="left:1114px;top:13.5px" width="12" height="11" viewBox="0 0 12 11"><path d="M0.6,2.8 H9.4 M2.6,8.2 H11.4" stroke="#000" stroke-width="1.6"/><path d="M8.2,0 L11.6,2.8 L8.2,5.6z M3.8,5.4 L0.4,8.2 L3.8,11z" fill="#000"/></svg>
<svg style="left:1155px;top:13px" width="12" height="12" viewBox="0 0 12 12"><rect x="0.3" y="0.6" width="11" height="11" rx="1.6" fill="#000"/><path d="M3.6,8.6 L8,4.2" stroke="#fff" stroke-width="1.5"/><path d="M4.6,3 H9.2 V7.6z" fill="#fff"/></svg>
<svg style="left:1187px;top:12.5px" width="12" height="13" viewBox="0 0 12 13"><path d="M4.4,0.4 h3.2 v4.6 h2.8 l-4.4,4.4 l-4.4,-4.4 h2.8z" fill="#000"/><path d="M0.4,8.8 h2.6 l3,2.4 l3,-2.4 h2.6 v3.6 h-11.2z" fill="#000"/></svg>
<svg style="left:1227.5px;top:12.7px" width="13" height="13" viewBox="0 0 13 13"><g transform="translate(6.5,6.5) scale(0.86)" fill="#000"><rect x="-1.5" y="-6.3" width="3" height="3.2" transform="rotate(0)"/><rect x="-1.5" y="-6.3" width="3" height="3.2" transform="rotate(45)"/><rect x="-1.5" y="-6.3" width="3" height="3.2" transform="rotate(90)"/><rect x="-1.5" y="-6.3" width="3" height="3.2" transform="rotate(135)"/><rect x="-1.5" y="-6.3" width="3" height="3.2" transform="rotate(180)"/><rect x="-1.5" y="-6.3" width="3" height="3.2" transform="rotate(225)"/><rect x="-1.5" y="-6.3" width="3" height="3.2" transform="rotate(270)"/><rect x="-1.5" y="-6.3" width="3" height="3.2" transform="rotate(315)"/><circle r="4.6"/><circle r="2.1" fill="#f3f3fd"/></g></svg>
<svg style="left:1259.5px;top:12.7px" width="13" height="13" viewBox="0 0 13 13"><circle cx="6.5" cy="6.5" r="5.6" fill="#000"/></svg>
<div class="t" style="left:1263px;top:-16.7px;font-size:10.5px;color:#fff;font-weight:700;">?</div>
<div class="t" style="left:343.3px;top:23.9px;font-size:11.2px;color:#111;font-weight:700;letter-spacing:-0.009px;">Display changes:</div>
<div class="b" style="left:443.3px;top:48.2px;width:476.4px;height:23.5px;background:#d9e8fc;border:1px solid #74c0e8;border-radius:4px;"></div>
<div class="b" style="left:446.2px;top:51.3px;width:31.8px;height:17.4px;background:#1874d4;border:1px solid #c2c4c0;border-radius:3px;"></div>
<div class="t" style="left:455.1px;top:24px;font-size:11px;color:#fff;font-weight:700;letter-spacing:0.019px;">All</div>
<div class="t" style="left:496px;top:23.9px;font-size:11.5px;color:#565250;font-weight:700;">First vs Last</div>
<div class="t" style="left:591.2px;top:23.9px;font-size:11.2px;color:#565250;font-weight:700;letter-spacing:-0.106px;">Branch only</div>
<div class="t" style="left:682.4px;top:23.9px;font-size:11.5px;color:#565250;font-weight:700;letter-spacing:0.075px;">Last commit</div>
<div class="t" style="left:778.2px;top:23.9px;font-size:11.5px;color:#565250;font-weight:700;">Accepted</div>
<div class="t" style="left:857.2px;top:23.9px;font-size:11.5px;color:#565250;font-weight:700;">Commits</div>
<div class="b" style="left:482px;top:54px;width:1px;height:12px;background:#74c0e8;"></div>
<div class="b" style="left:577px;top:54px;width:1px;height:12px;background:#74c0e8;"></div>
<div class="b" style="left:668.2px;top:54px;width:1px;height:12px;background:#74c0e8;"></div>
<div class="b" style="left:764px;top:54px;width:1px;height:12px;background:#74c0e8;"></div>
<div class="b" style="left:843.2px;top:54px;width:1px;height:12px;background:#74c0e8;"></div>
<div class="b" style="left:1130.2px;top:48.2px;width:145.6px;height:23.5px;background:#d9e8fc;border:1px solid #74c0e8;border-radius:4px;"></div>
<div class="t" style="left:1142.8px;top:23.6px;font-size:11.5px;color:#565250;font-weight:700;letter-spacing:-0.066px;">Show Advanced Mode</div>
<div class="t" style="left:343.5px;top:52.7px;font-size:11.5px;color:#111;font-weight:700;">Select revision:</div>
<div class="b" style="left:436px;top:79.3px;width:840px;height:18.6px;background:#fefefc;border:1px solid #c2c2ba;"></div>
<div class="b" style="left:443px;top:84.2px;width:10px;height:10px;background:#1a73e8;border-radius:2px;"></div>
<svg style="left:443px;top:84.2px" width="10" height="10" viewBox="0 0 10 10"><path d="M2,5.2 L4.2,7.4 L8.2,2.8" fill="none" stroke="#fff" stroke-width="1.5"/></svg>
<div class="t" style="left:457.5px;top:52.7px;font-size:10.6px;color:#111;letter-spacing:-0.041px;">All</div>
<svg style="left:1263.3px;top:85.4px" width="8" height="7" viewBox="0 0 8 7"><path d="M0,0 h7.9 l-3.95,6.3z" fill="#000"/></svg>
</body></html>
